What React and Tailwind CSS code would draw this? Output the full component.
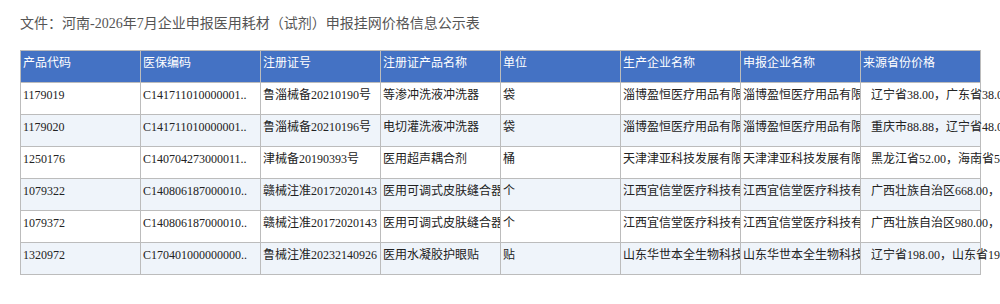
const headers = ["产品代码", "医保编码", "注册证号", "注册证产品名称", "单位", "生产企业名称", "申报企业名称", "来源省份价格"];

const rows = [
  ["1179019", "C141711010000001..", "鲁淄械备20210190号", "等渗冲洗液冲洗器", "袋", "淄博盈恒医疗用品有限公司", "淄博盈恒医疗用品有限公司", "辽宁省38.00，广东省38.00，山东省38.00"],
  ["1179020", "C141711010000001..", "鲁淄械备20210196号", "电切灌洗液冲洗器", "袋", "淄博盈恒医疗用品有限公司", "淄博盈恒医疗用品有限公司", "重庆市88.88，辽宁省48.00，山东省48.00"],
  ["1250176", "C140704273000011..", "津械备20190393号", "医用超声耦合剂", "桶", "天津津亚科技发展有限公司", "天津津亚科技发展有限公司", "黑龙江省52.00，海南省52.00"],
  ["1079322", "C140806187000010..", "赣械注准20172020143", "医用可调式皮肤缝合器", "个", "江西宜信堂医疗科技有限公司", "江西宜信堂医疗科技有限公司", "广西壮族自治区668.00，"],
  ["1079372", "C140806187000010..", "赣械注准20172020143", "医用可调式皮肤缝合器", "个", "江西宜信堂医疗科技有限公司", "江西宜信堂医疗科技有限公司", "广西壮族自治区980.00，"],
  ["1320972", "C170401000000000..", "鲁械注准20232140926", "医用水凝胶护眼贴", "贴", "山东华世本全生物科技有限公司", "山东华世本全生物科技有限公司", "辽宁省198.00，山东省198.00"],
];

const font = { fontFamily: '"Liberation Serif", "Noto Sans CJK SC", serif' };

export default function App() {
  return (
    <div className="w-[1000px] h-[304px] overflow-hidden bg-white pt-[14px] pl-[20px]" style={font}>
      <div className="text-[14px] leading-[20px] text-[#555]">
        文件：河南-2026年7月企业申报医用耗材（试剂）申报挂网价格信息公示表
      </div>
      <div className="mt-[16px] grid grid-cols-[repeat(8,120px)] w-[961px] border-r border-b border-[#bcbcbc]">
        {headers.map((h) => (
          <div key={h} className="h-[32px] border-l border-t border-[#bcbcbc] bg-[#4472c4] text-white text-[12px] leading-[16px] pt-[4px] pl-[2px] whitespace-nowrap overflow-hidden">
            {h}
          </div>
        ))}
        {rows.map((r, i) =>
          r.map((c, j) => (
            <div
              key={i + "-" + j}
              className={`h-[32px] border-l border-t border-[#bcbcbc] text-[12px] leading-[16px] pt-[4px] whitespace-nowrap text-[#222] ${
                i % 2 === 1 ? "bg-[#eff4fa]" : "bg-white"
              } ${j === 7 ? "pl-[10px] overflow-visible" : "pl-[2px] overflow-hidden"}`}
            >
              {c}
            </div>
          ))
        )}
      </div>
    </div>
  );
}
